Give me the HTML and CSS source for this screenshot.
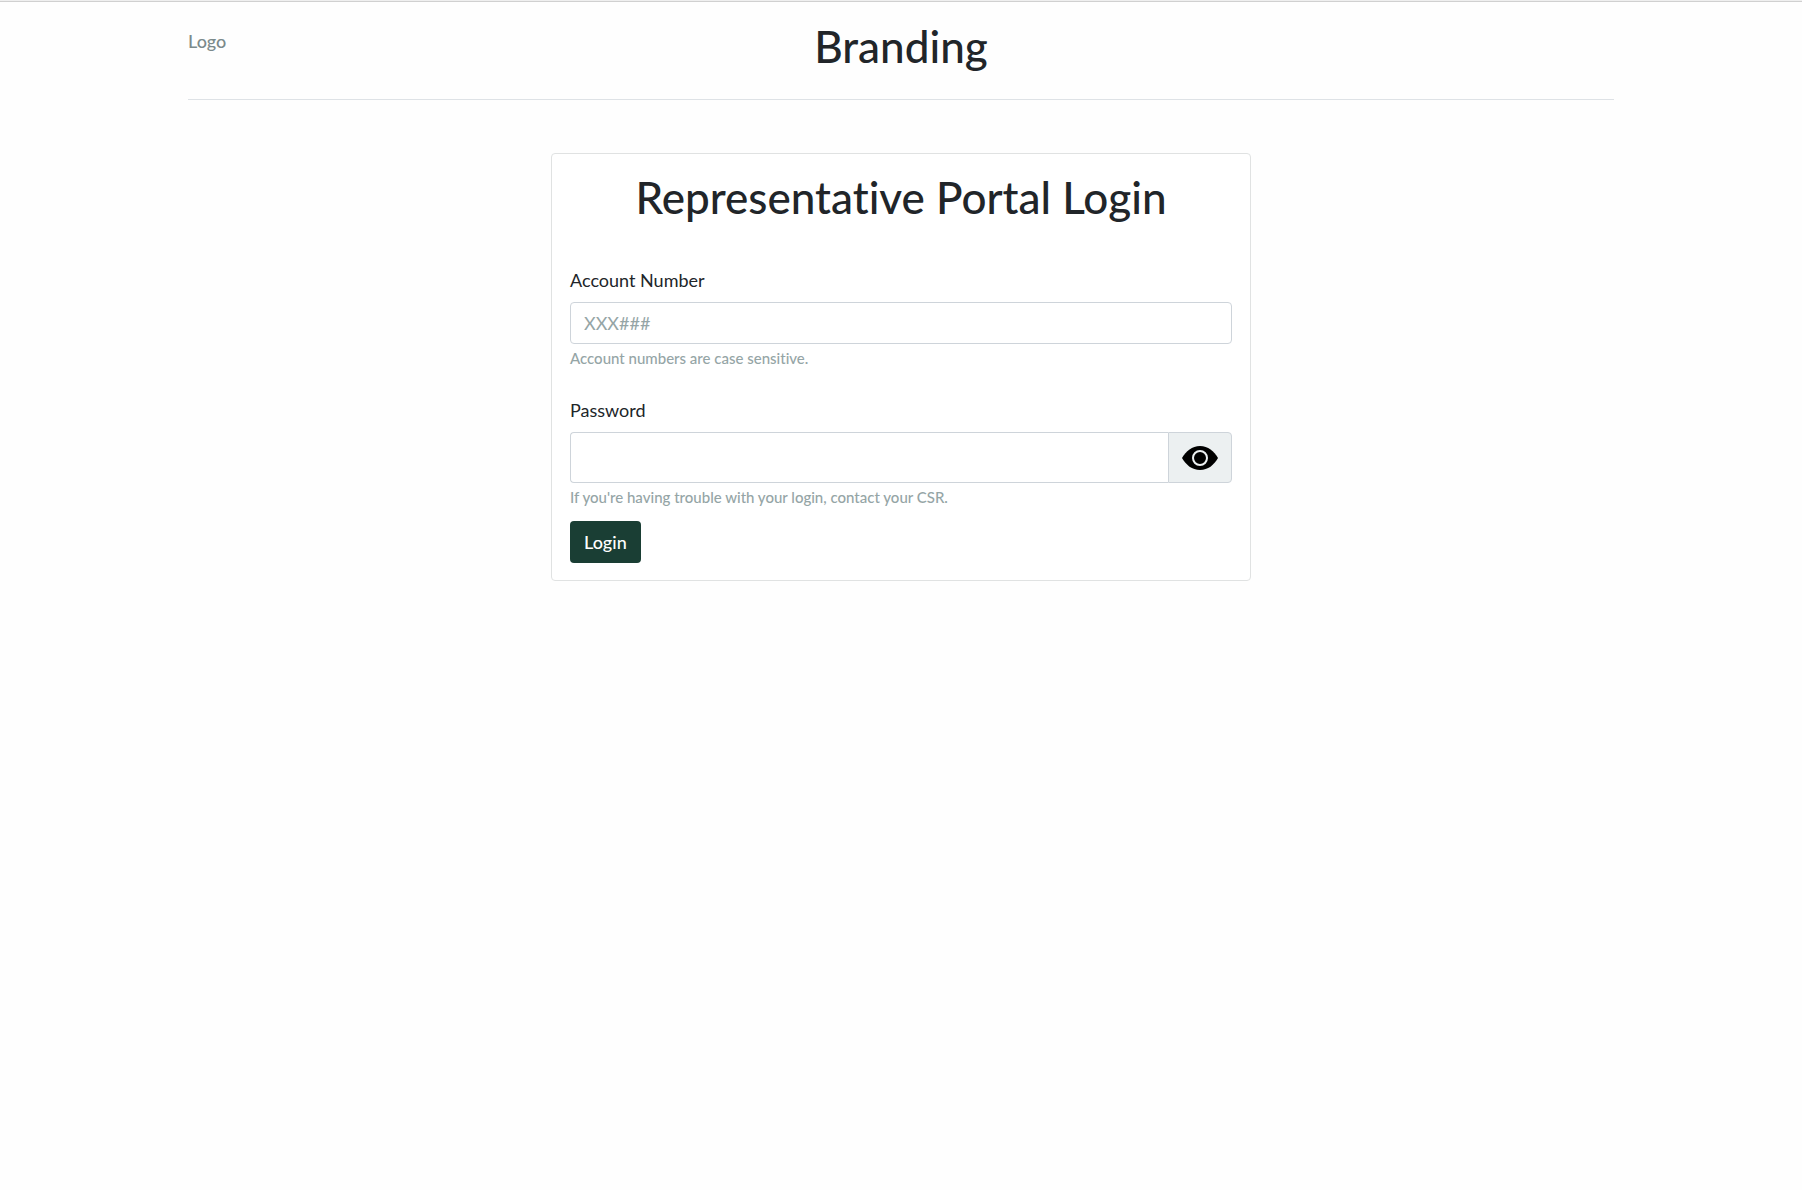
FILE: index.html
```html
<!DOCTYPE html>
<html lang="en">
<head>
<meta charset="utf-8">
<meta name="viewport" content="width=device-width, initial-scale=1">
<title>Representative Portal Login</title>
<link rel="stylesheet" href="styles.css">
</head>
<body>
<div class="container">
  <header class="header">
    <a class="logo" href="#">Logo</a>
    <h1 class="title">Branding</h1>
  </header>
  <main class="card">
    <h1 class="title">Representative Portal Login</h1>
    <form class="form">
      <div class="field">
        <label for="account">Account Number</label>
        <input class="control" id="account" type="text" placeholder="XXX###" aria-describedby="account-help">
        <small class="help" id="account-help">Account numbers are case sensitive.</small>
      </div>
      <div class="field">
        <label for="password">Password</label>
        <div class="group">
          <input class="control" id="password" type="password" aria-describedby="password-help">
          <button class="toggle" type="button" aria-label="Show password">
            <svg viewBox="0 0 36 24" width="36" height="24" aria-hidden="true">
              <path d="M0 12C4 5 10 0 18 0s14 5 18 12c-4 7-10 12-18 12S4 19 0 12z"/>
              <circle class="iris" cx="18" cy="12" r="7"/>
            </svg>
          </button>
        </div>
        <small class="help" id="password-help">If you're having trouble with your login, contact your CSR.</small>
      </div>
      <button class="login" type="submit">Login</button>
    </form>
  </main>
</div>
</body>
</html>
```
FILE: styles.css
```css
* { box-sizing: border-box; }

body {
  margin: 0;
  border-top: 1px solid #efefef;
  background: #fefefe;
  color: #212529;
  font: 18px/27px Lato, sans-serif;
  font-variant-ligatures: none;
}

body::before {
  content: "";
  display: block;
  height: 1px;
  background: #d0d0d0;
}

.container {
  max-width: 1458px;
  margin: 0 auto;
  padding: 0 16px;
}

.header {
  display: grid;
  grid-template-columns: 1fr auto 1fr;
  align-items: start;
  padding: 17px 0 26px;
  border-bottom: 1px solid #dee2e6;
}

.logo {
  margin-top: 9px;
  color: #7b8a8b;
  font-weight: 500;
  text-decoration: none;
}

.title {
  margin: 0;
  font-size: 44px;
  font-weight: 500;
  line-height: 54px;
  text-align: center;
}

.card {
  max-width: 700px;
  margin: 53px auto 0;
  padding: 16px 18px 17px;
  border: 1px solid #e0e2e2;
  border-radius: 4px;
  background: #fff;
}

.form {
  display: flex;
  flex-direction: column;
  align-items: flex-start;
  margin-top: 43px;
}

.field {
  display: flex;
  flex-direction: column;
  width: 100%;
  margin-bottom: 27px;
}

.field:last-of-type { margin-bottom: 12px; }

label { margin-bottom: 8px; }

.control {
  width: 100%;
  height: 42px;
  padding: 6px 13px;
  border: 1px solid #ced4da;
  border-radius: 4px;
  background: #fff;
  color: inherit;
  font: inherit;
}

.control::placeholder {
  color: #95a5a6;
  opacity: 1;
}

.help {
  margin-top: 2px;
  color: #95a5a6;
  font-size: 15px;
  font-weight: 500;
  line-height: 24px;
}

.group { display: flex; }

.group .control {
  height: 51px;
  border-right: 0;
  border-radius: 4px 0 0 4px;
}

.toggle {
  display: flex;
  align-items: center;
  padding: 0 13px;
  border: 1px solid #ced4da;
  border-radius: 0 4px 4px 0;
  background: #ecf0f1;
}

.iris {
  stroke: #ecf0f1;
  stroke-width: 2;
}

.login {
  height: 42px;
  padding: 0 14px;
  border: 0;
  border-radius: 4px;
  background: #1a3e34;
  color: #fff;
  font: inherit;
  font-weight: 500;
}
```
